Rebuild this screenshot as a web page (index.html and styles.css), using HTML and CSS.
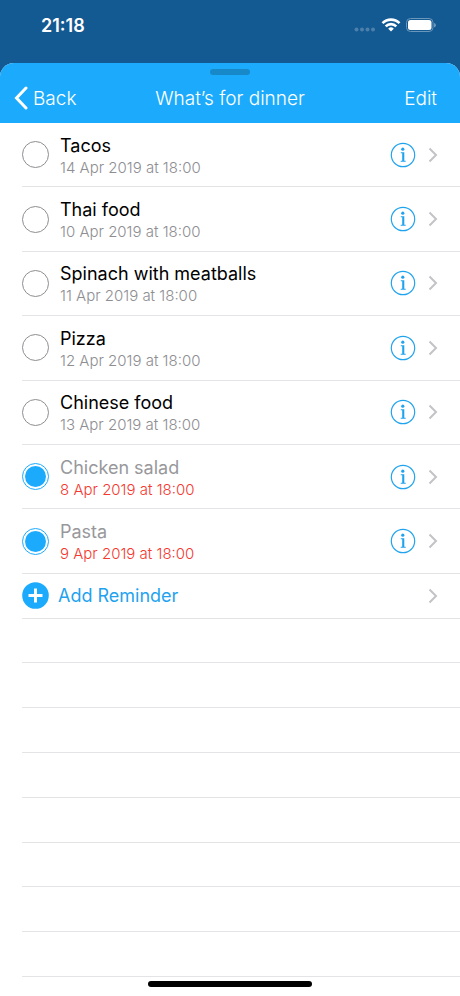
FILE: index.html
```html
<!DOCTYPE html>
<html lang="en">
<head>
  <meta charset="UTF-8">
  <meta name="viewport" content="width=device-width, initial-scale=1">
  <title>What’s for dinner</title>
  <link rel="stylesheet" href="styles.css">
</head>
<body>

  <div class="status-bar">
    <span class="time">21:18</span>
    <div class="status-icons">
      <svg class="cellular" width="22" height="16" viewBox="0 0 22 16">
        <circle cx="2.5" cy="12.5" r="2"/>
        <circle cx="8" cy="12.5" r="2"/>
        <circle cx="13.5" cy="12.5" r="2"/>
        <circle cx="19" cy="12.5" r="2"/>
      </svg>
      <svg class="wifi" width="20" height="16" viewBox="0 0 20 16">
        <path d="M1.5 6.2a12 12 0 0 1 17 0M4.7 9.3a7.5 7.5 0 0 1 10.6 0"/>
        <path class="dot" d="M10 14.6l-2.8-2.9a4 4 0 0 1 5.6 0z"/>
      </svg>
      <svg class="battery" width="30" height="16" viewBox="0 0 30 16">
        <rect class="case" x="0.5" y="1.5" width="26.5" height="13" rx="4"/>
        <rect class="charge" x="2" y="3" width="23.5" height="10" rx="2.5"/>
        <path class="tip" d="M28 6v4.400q2-.6 2-2.200t-2-2.200z"/>
      </svg>
    </div>
  </div>

  <div class="sheet">
    <header class="nav">
      <div class="grabber"></div>
      <div class="nav-row">
        <a class="back" href="#lists">
          <svg width="14" height="24" viewBox="0 0 14 24"><path d="M12 2L2.500 12 12 22"/></svg>
          Back
        </a>
        <h1>What’s for dinner</h1>
        <button class="edit" type="button">Edit</button>
      </div>
    </header>

    <ul class="reminders">
      <li class="reminder">
        <input type="checkbox" id="tacos">
        <label for="tacos"><span class="name">Tacos</span><span class="due">14 Apr 2019 at 18:00</span></label>
        <button class="info" type="button" aria-label="Info about Tacos"><svg width="26" height="26" viewBox="0 0 26 26"><use href="#icon-info"/></svg></button>
        <a class="open" href="#tacos" aria-label="Open Tacos"><svg width="10" height="16" viewBox="0 0 10 16"><use href="#icon-chevron"/></svg></a>
      </li>
      <li class="reminder">
        <input type="checkbox" id="thai">
        <label for="thai"><span class="name">Thai food</span><span class="due">10 Apr 2019 at 18:00</span></label>
        <button class="info" type="button" aria-label="Info about Thai food"><svg width="26" height="26" viewBox="0 0 26 26"><use href="#icon-info"/></svg></button>
        <a class="open" href="#thai" aria-label="Open Thai food"><svg width="10" height="16" viewBox="0 0 10 16"><use href="#icon-chevron"/></svg></a>
      </li>
      <li class="reminder">
        <input type="checkbox" id="spinach">
        <label for="spinach"><span class="name">Spinach with meatballs</span><span class="due">11 Apr 2019 at 18:00</span></label>
        <button class="info" type="button" aria-label="Info about Spinach with meatballs"><svg width="26" height="26" viewBox="0 0 26 26"><use href="#icon-info"/></svg></button>
        <a class="open" href="#spinach" aria-label="Open Spinach with meatballs"><svg width="10" height="16" viewBox="0 0 10 16"><use href="#icon-chevron"/></svg></a>
      </li>
      <li class="reminder">
        <input type="checkbox" id="pizza">
        <label for="pizza"><span class="name">Pizza</span><span class="due">12 Apr 2019 at 18:00</span></label>
        <button class="info" type="button" aria-label="Info about Pizza"><svg width="26" height="26" viewBox="0 0 26 26"><use href="#icon-info"/></svg></button>
        <a class="open" href="#pizza" aria-label="Open Pizza"><svg width="10" height="16" viewBox="0 0 10 16"><use href="#icon-chevron"/></svg></a>
      </li>
      <li class="reminder">
        <input type="checkbox" id="chinese">
        <label for="chinese"><span class="name">Chinese food</span><span class="due">13 Apr 2019 at 18:00</span></label>
        <button class="info" type="button" aria-label="Info about Chinese food"><svg width="26" height="26" viewBox="0 0 26 26"><use href="#icon-info"/></svg></button>
        <a class="open" href="#chinese" aria-label="Open Chinese food"><svg width="10" height="16" viewBox="0 0 10 16"><use href="#icon-chevron"/></svg></a>
      </li>
      <li class="reminder done">
        <input type="checkbox" id="chicken" checked>
        <label for="chicken"><span class="name">Chicken salad</span><span class="due">8 Apr 2019 at 18:00</span></label>
        <button class="info" type="button" aria-label="Info about Chicken salad"><svg width="26" height="26" viewBox="0 0 26 26"><use href="#icon-info"/></svg></button>
        <a class="open" href="#chicken" aria-label="Open Chicken salad"><svg width="10" height="16" viewBox="0 0 10 16"><use href="#icon-chevron"/></svg></a>
      </li>
      <li class="reminder done">
        <input type="checkbox" id="pasta" checked>
        <label for="pasta"><span class="name">Pasta</span><span class="due">9 Apr 2019 at 18:00</span></label>
        <button class="info" type="button" aria-label="Info about Pasta"><svg width="26" height="26" viewBox="0 0 26 26"><use href="#icon-info"/></svg></button>
        <a class="open" href="#pasta" aria-label="Open Pasta"><svg width="10" height="16" viewBox="0 0 10 16"><use href="#icon-chevron"/></svg></a>
      </li>
    </ul>

    <button class="add" type="button">
      <svg class="plus" width="27" height="27" viewBox="0 0 27 27">
        <circle cx="13.5" cy="13.5" r="13.300"/>
        <path d="M13.500 6.500v14M6.500 13.500h14"/>
      </svg>
      <span class="add-text">Add Reminder</span>
      <svg class="chevron" width="10" height="16" viewBox="0 0 10 16"><use href="#icon-chevron"/></svg>
    </button>

    <div class="blank"></div>
    <div class="blank"></div>
    <div class="blank"></div>
    <div class="blank"></div>
    <div class="blank"></div>
    <div class="blank"></div>
    <div class="blank"></div>
    <div class="blank"></div>

    <div class="home-area"><div class="home-bar"></div></div>
  </div>

  <!-- shared icons -->
  <svg class="icons" width="0" height="0">
    <symbol id="icon-info" viewBox="0 0 26 26">
      <circle cx="13" cy="13" r="11.7" fill="none" stroke="currentColor" stroke-width="1.2"/>
      <circle cx="12.8" cy="7.200" r="1.600" fill="currentColor"/>
      <path d="M10.800 10.300h3.500v8.400h1.400v1h-5v-1h1.500v-7.400h-1.400z" fill="currentColor"/>
    </symbol>
    <symbol id="icon-chevron" viewBox="0 0 10 16">
      <path d="M1.500 1.500L8 8l-6.500 6.500" fill="none" stroke="#c3c3c7" stroke-width="2"/>
    </symbol>
  </svg>

</body>
</html>
```
FILE: styles.css
```css
* {
  box-sizing: border-box;
}
body {
  margin: 0;
  min-height: 100vh;
  display: flex;
  flex-direction: column;
  font-family: Inter, "Liberation Sans", sans-serif;
  background-color: #135992;
}
svg {
  display: block;
  flex: none;
}
button {
  padding: 0;
  border: none;
  background: none;
  font-family: inherit;
  cursor: pointer;
}
a {
  color: inherit;
  text-decoration: none;
}

/* status bar */
.status-bar {
  height: 63px;
  padding: 14px 24px 0 41px;
  display: flex;
  align-items: flex-start;
  justify-content: space-between;
  color: white;
}
.time {
  font-size: 18px;
  line-height: 24px;
  font-weight: 600;
}
.status-icons {
  display: flex;
  gap: 5px;
  padding-top: 3px;
}
.cellular {
  fill: #4c80ab;
}
.wifi {
  fill: none;
  stroke: white;
  stroke-width: 2.6;
}
.wifi .dot {
  fill: white;
  stroke: none;
}
.battery .case {
  fill: none;
  stroke: #6b97bb;
}
.battery .charge {
  fill: white;
}
.battery .tip {
  fill: #6b97bb;
}

/* sheet */
.sheet {
  flex: 1;
  display: flex;
  flex-direction: column;
  background-color: white;
  border-radius: 14px 14px 0 0;
  overflow: hidden;
}
.nav {
  padding: 6px 0 2px;
  background-color: #1cabfc;
  color: white;
}
.grabber {
  width: 40px;
  height: 6px;
  margin: 0 auto;
  border-radius: 3px;
  background-color: #1788c8;
}
.nav-row {
  height: 46px;
  padding: 0 14px;
  display: grid;
  grid-template-columns: 1fr auto 1fr;
  align-items: center;
  font-size: 19px;
  font-weight: 300;
}
.back {
  display: flex;
  align-items: center;
  gap: 5px;
}
.back svg {
  fill: none;
  stroke: white;
  stroke-width: 3;
  stroke-linecap: round;
}
h1 {
  margin: 0;
  font-size: 19px;
  font-weight: 300;
}
.edit {
  justify-self: end;
  margin-right: 9px;
  color: white;
  font-size: 19px;
  font-weight: 300;
}

/* reminders, the rows share the free height */
.reminders {
  flex: 161 0 10px;
  margin: 0;
  padding: 0;
  list-style: none;
  display: flex;
  flex-direction: column;
}
.reminder {
  flex: 1 0 0;
  min-height: 56px;
  margin-left: 22px;
  padding-right: 22px;
  display: flex;
  align-items: center;
  border-bottom: 1px solid #e4e4e6;
}
.reminder input {
  appearance: none;
  flex: none;
  width: 27px;
  height: 27px;
  margin: 0;
  border: 1px solid #8e8e92;
  border-radius: 50%;
}
.reminder input:checked {
  padding: 2px;
  border-color: #1cabfc;
  background-color: #1cabfc;
  background-clip: content-box;
}
.reminder label {
  flex: 1;
  min-width: 0;
  margin-left: 11px;
  padding-top: 3px;
}
.name {
  display: block;
  font-size: 18px;
  line-height: 23px;
}
.due {
  display: block;
  font-size: 15px;
  line-height: 22px;
  font-weight: 300;
  color: #8e8e92;
}
.done .name {
  color: #98989c;
}
.done .due {
  color: #f4382f;
}
.info {
  color: #1fa3ee;
}
.open {
  margin-left: 12px;
}

.add {
  flex: 16 0 0;
  min-height: 40px;
  margin-left: 22px;
  padding-right: 22px;
  display: flex;
  align-items: center;
  border-bottom: 1px solid #e4e4e6;
  text-align: left;
}
.plus {
  fill: #1cabfc;
  stroke: none;
}
.plus path {
  stroke: white;
  stroke-width: 3;
}
.add-text {
  flex: 1;
  margin-left: 9px;
  font-size: 18px;
  color: #1fa3ee;
}
.blank {
  flex: 16 0 0;
  margin-left: 22px;
  border-bottom: 1px solid #e4e4e6;
}

/* home indicator */
.home-area {
  height: 19px;
  padding-top: 4px;
}
.home-bar {
  width: 164px;
  height: 6px;
  margin: 0 auto;
  border-radius: 3px;
  background-color: black;
}
.icons {
  position: absolute;
}
```
